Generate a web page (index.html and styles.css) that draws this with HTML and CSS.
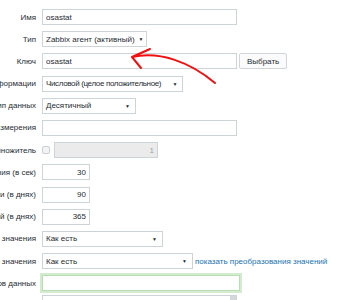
FILE: index.html
```html
<!DOCTYPE html>
<html lang="ru">
<head>
<meta charset="UTF-8">
<meta name="viewport" content="width=device-width, initial-scale=1.0">
<title>Элемент данных</title>
<link rel="stylesheet" href="styles.css">
</head>
<body>

<form class="item-form">
  <div class="label"><span>Имя</span></div>
  <div class="field"><input class="input w-wide" type="text" value="osastat"></div>

  <div class="label"><span>Тип</span></div>
  <div class="field"><div class="select w-type">Zabbix агент (активный)<i>▼</i></div></div>

  <div class="label"><span>Ключ</span></div>
  <div class="field">
    <input class="input w-wide" type="text" value="osastat">
    <button type="button" class="btn">Выбрать</button>
  </div>

  <div class="label"><span>Тип информации</span></div>
  <div class="field"><div class="select w-info">Числовой (целое положительное)<i>▼</i></div></div>

  <div class="label"><span>Тип данных</span></div>
  <div class="field"><div class="select w-data">Десятичный<i>▼</i></div></div>

  <div class="label"><span>Единица измерения</span></div>
  <div class="field"><input class="input w-wide" type="text" value=""></div>

  <div class="label"><span>Использовать множитель</span></div>
  <div class="field">
    <span class="checkbox"></span>
    <input class="input w-mult num" type="text" value="1" disabled>
  </div>

  <div class="label"><span>Интервал обновления (в сек)</span></div>
  <div class="field"><input class="input w-num num" type="text" value="30"></div>

  <div class="label"><span>Период хранения истории (в днях)</span></div>
  <div class="field"><input class="input w-num num" type="text" value="90"></div>

  <div class="label"><span>Период хранения динамики изменений (в днях)</span></div>
  <div class="field"><input class="input w-num num" type="text" value="365"></div>

  <div class="label"><span>Хранить значения</span></div>
  <div class="field"><div class="select w-store">Как есть<i>▼</i></div></div>

  <div class="label"><span>Отображение значения</span></div>
  <div class="field">
    <div class="select w-show">Как есть<i>▼</i></div>
    <a href="#" class="link">показать преобразования значений</a>
  </div>

  <div class="label"><span>Новая группа элементов данных</span></div>
  <div class="field"><input class="input w-group focus" type="text" value=""></div>

  <div class="label"><span>Группы элементов данных</span></div>
  <div class="field"><div class="listbox w-wide"><b></b></div></div>
</form>

<svg class="arrow" width="353" height="300" viewBox="0 0 353 300">
  <path d="M132 57 C160 51 190 62 215 83 M132 57 L150 49 M132 57 L141 68" fill="none" stroke="#f01010" stroke-width="2" stroke-linecap="round"/>
</svg>

</body>
</html>
```

FILE: styles.css
```css
body {
  margin: 0;
  font-family: 'Liberation Sans', Arial, sans-serif;
  font-size: 8px;
  color: #1f2c33;
  background: #fff;
}

.item-form {
  display: grid;
  grid-template-columns: 36px auto;
  column-gap: 6px;
  row-gap: 6.2px;
  padding-top: 9px;
}

.label {
  display: flex;
  justify-content: flex-end;
  align-items: center;
  height: 16px;
}

.label span {
  white-space: nowrap;
}

.field {
  display: flex;
  align-items: center;
  gap: 2px;
  height: 16px;
}

.input, .select, .btn, .listbox {
  box-sizing: border-box;
  height: 16px;
  border: 1px solid #cdd4d8;
  background: #fff;
  font: inherit;
  color: inherit;
  margin: 0;
}

.input {
  padding: 0 3px;
  outline: none;
}

.input.num {
  text-align: right;
}

.input:disabled {
  background: #ebebeb;
  color: #9aa0a3;
}

.input.focus {
  border-color: #b9dcb3;
  box-shadow: 0 0 0 2px #d3ebcf;
}

.select {
  display: flex;
  align-items: center;
  justify-content: space-between;
  gap: 4px;
  padding: 0 3px;
  white-space: nowrap;
}

.select i {
  font-style: normal;
  font-size: 5px;
  padding-right: 2px;
}

.w-info {
  letter-spacing: -0.35px;
}

.btn {
  padding: 0 7px;
  background: #fbfbfb;
  border-color: #cfd5d8;
  border-radius: 2px;
}

.checkbox {
  box-sizing: border-box;
  width: 8px;
  height: 8px;
  border: 1px solid #c9cfd2;
  border-radius: 2px;
  background: #f4f4f4;
  margin-right: 2px;
}

.link {
  color: #1a73b5;
  text-decoration: none;
  white-space: nowrap;
}

.listbox {
  position: relative;
  height: 20px;
}

.listbox b {
  position: absolute;
  right: 0;
  top: 0;
  width: 6px;
  height: 6px;
  background: #d4d8da;
}

.w-wide { width: 195px; }
.w-type { width: 105px; }
.w-info { width: 141px; }
.w-data { width: 94px; }
.w-mult { width: 104px; }
.w-num { width: 48px; }
.w-store { width: 121px; }
.w-show { width: 151px; }
.w-group { width: 198px; }

.arrow {
  position: absolute;
  left: 0;
  top: 0;
  pointer-events: none;
}
```
